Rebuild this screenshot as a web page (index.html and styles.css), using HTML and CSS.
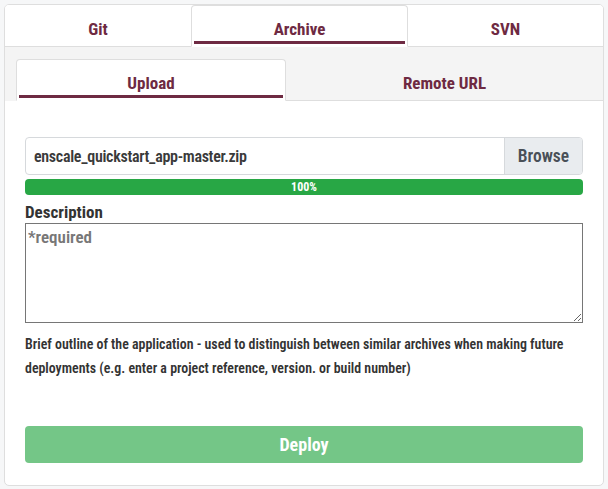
FILE: index.html
```html
<!DOCTYPE html>
<html lang="en">
<head>
<meta charset="utf-8">
<title>Deploy archive</title>
<link rel="stylesheet" href="styles.css">
</head>
<body>
<div class="card">
  <nav class="tabs top-tabs">
    <div class="tab"><span class="tab-label">Git</span></div>
    <div class="tab active"><span class="tab-label">Archive</span></div>
    <div class="tab"><span class="tab-label">SVN</span></div>
  </nav>
  <div class="sub-area">
    <nav class="tabs sub-tabs">
      <div class="tab active"><span class="tab-label">Upload</span></div>
      <div class="tab"><span class="tab-label">Remote URL</span></div>
    </nav>
  </div>
  <form class="content">
    <div class="input-group">
      <div class="file-name">enscale_quickstart_app-master.zip</div>
      <div class="browse">Browse</div>
    </div>
    <div class="progress"><div class="progress-bar" style="width:100%">100%</div></div>
    <label class="label" for="desc">Description</label>
    <textarea id="desc" class="textarea" placeholder="*required"></textarea>
    <p class="help">Brief outline of the application - used to distinguish between similar archives when making future deployments (e.g. enter a project reference, version. or build number)</p>
    <button type="button" class="deploy" disabled>Deploy</button>
  </form>
</div>
</body>
</html>
```
FILE: styles.css
```css
* { box-sizing: border-box; }
html, body { height: 100%; }
body {
  margin: 0;
  padding: 4px;
  background: #f6f7f8;
  font-family: "Roboto Condensed", "Open Sans Condensed", "Liberation Sans Narrow", sans-serif;
  color: #333;
}
.card {
  width: 600px;
  height: 482px;
  background: #fff;
  border: 1px solid #dedede;
  border-radius: 5px;
  overflow: hidden;
  display: flex;
  flex-direction: column;
}
.tabs {
  display: grid;
  border-bottom: 1px solid #dedede;
}
.top-tabs {
  grid-template-columns: 186px 217px 1fr;
  height: 42px;
  background: #fff;
}
.tab {
  display: flex;
  align-items: stretch;
  padding: 0 2px;
  color: #6e2a42;
  font-weight: 700;
  font-size: 17px;
  margin-bottom: -1px;
  border: 1px solid transparent;
  border-radius: 4px 4px 0 0;
}
.tab.active {
  background: #fff;
  border-color: #dedede;
  border-bottom-color: #fff;
}
.tab-label {
  flex: 1;
  display: flex;
  align-items: flex-end;
  justify-content: center;
  border-bottom: 3px solid transparent;
  margin-bottom: 2px;
  padding-bottom: 2px;
  line-height: 20px;
}
.tab.active .tab-label { border-bottom-color: #6e2a42; }
.sub-area {
  background: #f4f4f4;
  padding: 12px 0 0 11px;
}
.sub-tabs {
  grid-template-columns: 270px 1fr;
  height: 42px;
}
.content {
  flex: 1;
  padding: 36px 20px 0 20px;
  display: flex;
  flex-direction: column;
}
.input-group {
  display: flex;
  height: 38px;
  border: 1px solid #d6d9dc;
  border-radius: 4px;
  overflow: hidden;
}
.file-name {
  flex: 1;
  display: flex;
  align-items: center;
  padding-left: 8px;
  font-size: 16px;
  letter-spacing: -0.3px;
  font-weight: 600;
  color: #3a3a3a;
}
.browse {
  width: 78px;
  display: flex;
  align-items: center;
  justify-content: center;
  background: #e9ecef;
  border-left: 1px solid #d6d9dc;
  font-size: 17.5px;
  font-weight: 600;
  color: #495057;
}
.progress {
  margin-top: 4px;
  height: 16px;
  border-radius: 4px;
  background: #e9ecef;
  overflow: hidden;
}
.progress-bar {
  height: 100%;
  background: #28a745;
  color: #fff;
  font-size: 12px;
  font-weight: 700;
  display: flex;
  align-items: center;
  justify-content: center;
}
.label {
  margin-top: 7px;
  font-size: 17px;
  font-weight: 700;
  color: #333;
  line-height: 21px;
}
.textarea {
  margin-top: 0;
  height: 100px;
  border: 1px solid #767676;
  border-radius: 0;
  padding: 3px 2px;
  font-family: inherit;
  font-size: 17px;
  font-weight: 600;
  color: #333;
  resize: vertical;
}
.textarea::placeholder { color: #777; opacity: 1; }
.help {
  margin: 9px 0 0 0;
  font-size: 13.9px;
  font-weight: 600;
  line-height: 24px;
  color: #333;
}
.deploy {
  margin-top: 46px;
  height: 37px;
  border: 0;
  border-radius: 4px;
  background: #74c687;
  color: #fff;
  font-family: inherit;
  font-size: 18px;
  font-weight: 700;
}
```
